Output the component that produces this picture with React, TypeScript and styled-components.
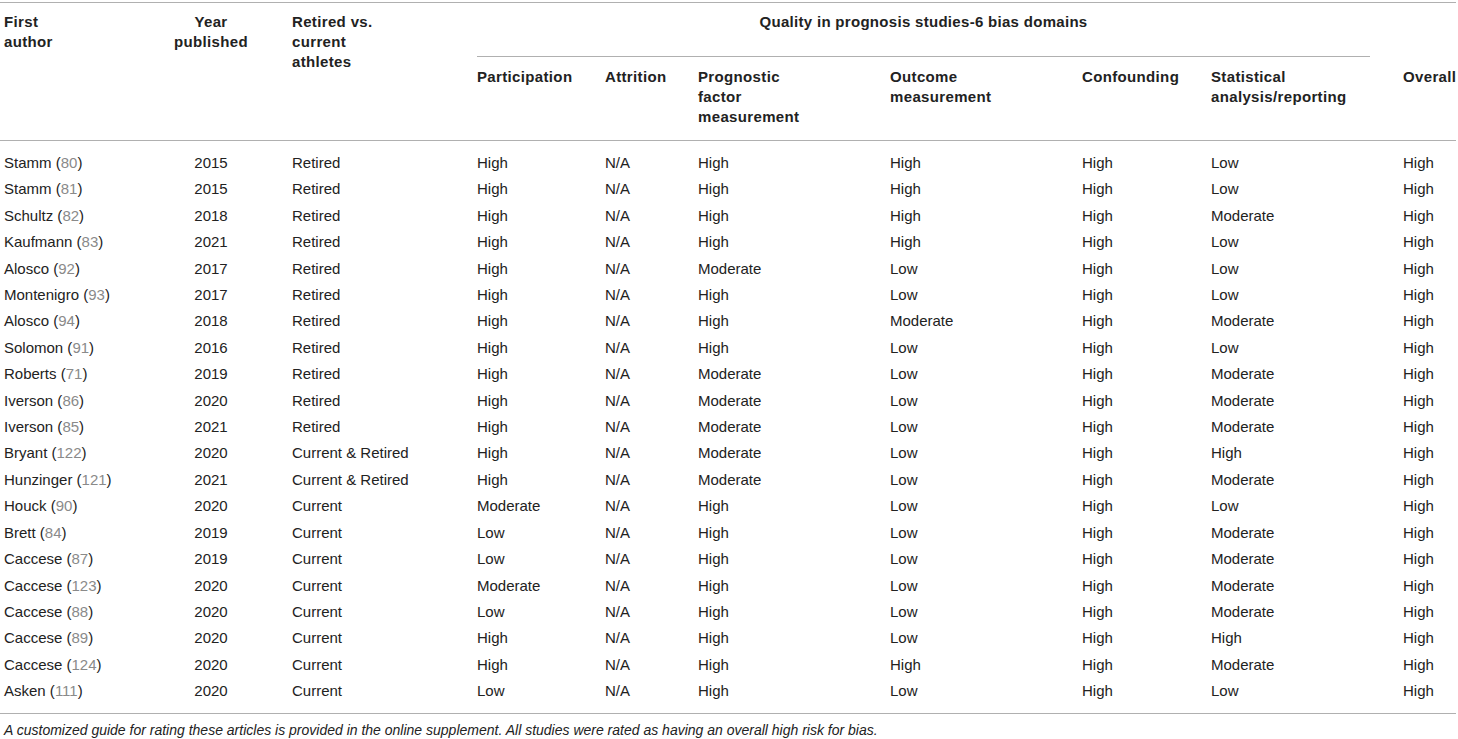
import React from "react";
import styled, { createGlobalStyle } from "styled-components";

const Global = createGlobalStyle`
  html, body { margin: 0; padding: 0; background: #ffffff; }
  body { font-family: "Liberation Sans", Arial, Helvetica, sans-serif; color: #222; }
`;

const Page = styled.div`
  padding-top: 2px;
  width: 1456px;
`;

const Table = styled.table`
  width: 1456px;
  border-collapse: collapse;
  table-layout: fixed;
  border-top: 1px solid #b0b0b0;
  border-bottom: 1px solid #b0b0b0;
  font-size: 15px;
`;

const HeadCell = styled.th<{ $center?: boolean; $pt?: number; $pb?: number }>`
  font-weight: bold;
  letter-spacing: 0.35px;
  text-align: ${(p) => (p.$center ? "center" : "left")};
  vertical-align: top;
  line-height: 20px;
  padding: ${(p) => p.$pt ?? 9}px 4px ${(p) => p.$pb ?? 0}px 4px;
  color: #222;
  white-space: nowrap;
`;

const SubRow = styled.tr`
  border-bottom: 1px solid #b0b0b0;
`;

const GroupCell = styled.th`
  font-weight: bold;
  letter-spacing: 0.3px;
  text-align: center;
  vertical-align: top;
  line-height: 20px;
  padding: 9px 29px 0 4px;
  color: #222;
  white-space: nowrap;
`;

const GroupRule = styled.div`
  margin-top: 24px;
  height: 1px;
  background: #b0b0b0;
`;

const Row = styled.tr`
  &:first-child td { padding-top: 12px; }
  &:last-child td { padding-bottom: 11px; }
`;

const Cell = styled.td<{ $center?: boolean }>`
  text-align: ${(p) => (p.$center ? "center" : "left")};
  line-height: 20.4px;
  padding: 3px 4px;
  white-space: nowrap;
  color: #222;
`;

const Ref = styled.span`
  color: #8a8a8a;
`;

const Footnote = styled.p`
  margin: 0;
  padding: 7px 0 0 4px;
  font-style: italic;
  font-size: 14px;
  line-height: 18px;
  color: #222;
  white-space: nowrap;
`;

const widths = [134, 154, 185, 128, 93, 192, 192, 129, 192, 57];

type Study = [string, number, number, string, string, string, string, string, string, string];

const rows: Study[] = [
  ["Stamm", 80, 2015, "Retired", "High", "High", "High", "High", "Low", "High"],
  ["Stamm", 81, 2015, "Retired", "High", "High", "High", "High", "Low", "High"],
  ["Schultz", 82, 2018, "Retired", "High", "High", "High", "High", "Moderate", "High"],
  ["Kaufmann", 83, 2021, "Retired", "High", "High", "High", "High", "Low", "High"],
  ["Alosco", 92, 2017, "Retired", "High", "Moderate", "Low", "High", "Low", "High"],
  ["Montenigro", 93, 2017, "Retired", "High", "High", "Low", "High", "Low", "High"],
  ["Alosco", 94, 2018, "Retired", "High", "High", "Moderate", "High", "Moderate", "High"],
  ["Solomon", 91, 2016, "Retired", "High", "High", "Low", "High", "Low", "High"],
  ["Roberts", 71, 2019, "Retired", "High", "Moderate", "Low", "High", "Moderate", "High"],
  ["Iverson", 86, 2020, "Retired", "High", "Moderate", "Low", "High", "Moderate", "High"],
  ["Iverson", 85, 2021, "Retired", "High", "Moderate", "Low", "High", "Moderate", "High"],
  ["Bryant", 122, 2020, "Current & Retired", "High", "Moderate", "Low", "High", "High", "High"],
  ["Hunzinger", 121, 2021, "Current & Retired", "High", "Moderate", "Low", "High", "Moderate", "High"],
  ["Houck", 90, 2020, "Current", "Moderate", "High", "Low", "High", "Low", "High"],
  ["Brett", 84, 2019, "Current", "Low", "High", "Low", "High", "Moderate", "High"],
  ["Caccese", 87, 2019, "Current", "Low", "High", "Low", "High", "Moderate", "High"],
  ["Caccese", 123, 2020, "Current", "Moderate", "High", "Low", "High", "Moderate", "High"],
  ["Caccese", 88, 2020, "Current", "Low", "High", "Low", "High", "Moderate", "High"],
  ["Caccese", 89, 2020, "Current", "High", "High", "Low", "High", "High", "High"],
  ["Caccese", 124, 2020, "Current", "High", "High", "High", "High", "Moderate", "High"],
  ["Asken", 111, 2020, "Current", "Low", "High", "Low", "High", "Low", "High"],
];

const subHeads = [
  ["Participation"],
  ["Attrition"],
  ["Prognostic", "factor", "measurement"],
  ["Outcome", "measurement"],
  ["Confounding"],
  ["Statistical", "analysis/reporting"],
  ["Overall"],
];

const Lines = ({ parts }: { parts: string[] }) => (
  <>
    {parts.map((p, i) => (
      <React.Fragment key={i}>
        {i > 0 && <br />}
        {p}
      </React.Fragment>
    ))}
  </>
);

export default function App() {
  return (
    <>
      <Global />
      <Page>
        <Table>
          <colgroup>
            {widths.map((w, i) => (
              <col key={i} style={{ width: w }} />
            ))}
          </colgroup>
          <thead>
            <tr>
              <HeadCell rowSpan={2}>
                <Lines parts={["First", "author"]} />
              </HeadCell>
              <HeadCell rowSpan={2} $center>
                <Lines parts={["Year", "published"]} />
              </HeadCell>
              <HeadCell rowSpan={2}>
                <Lines parts={["Retired vs.", "current", "athletes"]} />
              </HeadCell>
              <GroupCell colSpan={6}>
                Quality in prognosis studies-6 bias domains
                <GroupRule />
              </GroupCell>
              <HeadCell />
            </tr>
            <SubRow>
              {subHeads.map((h, i) => (
                <HeadCell key={i} $pt={10} $pb={13}>
                  <Lines parts={h} />
                </HeadCell>
              ))}
            </SubRow>
          </thead>
          <tbody>
            {rows.map((r, i) => (
              <Row key={i}>
                <Cell>
                  {r[0]} (<Ref>{r[1]}</Ref>)
                </Cell>
                <Cell $center>{r[2]}</Cell>
                <Cell>{r[3]}</Cell>
                <Cell>{r[4]}</Cell>
                <Cell>N/A</Cell>
                <Cell>{r[5]}</Cell>
                <Cell>{r[6]}</Cell>
                <Cell>{r[7]}</Cell>
                <Cell>{r[8]}</Cell>
                <Cell>{r[9]}</Cell>
              </Row>
            ))}
          </tbody>
        </Table>
        <Footnote>
          A customized guide for rating these articles is provided in the online supplement. All studies were rated as having an overall high risk for bias.
        </Footnote>
      </Page>
    </>
  );
}
